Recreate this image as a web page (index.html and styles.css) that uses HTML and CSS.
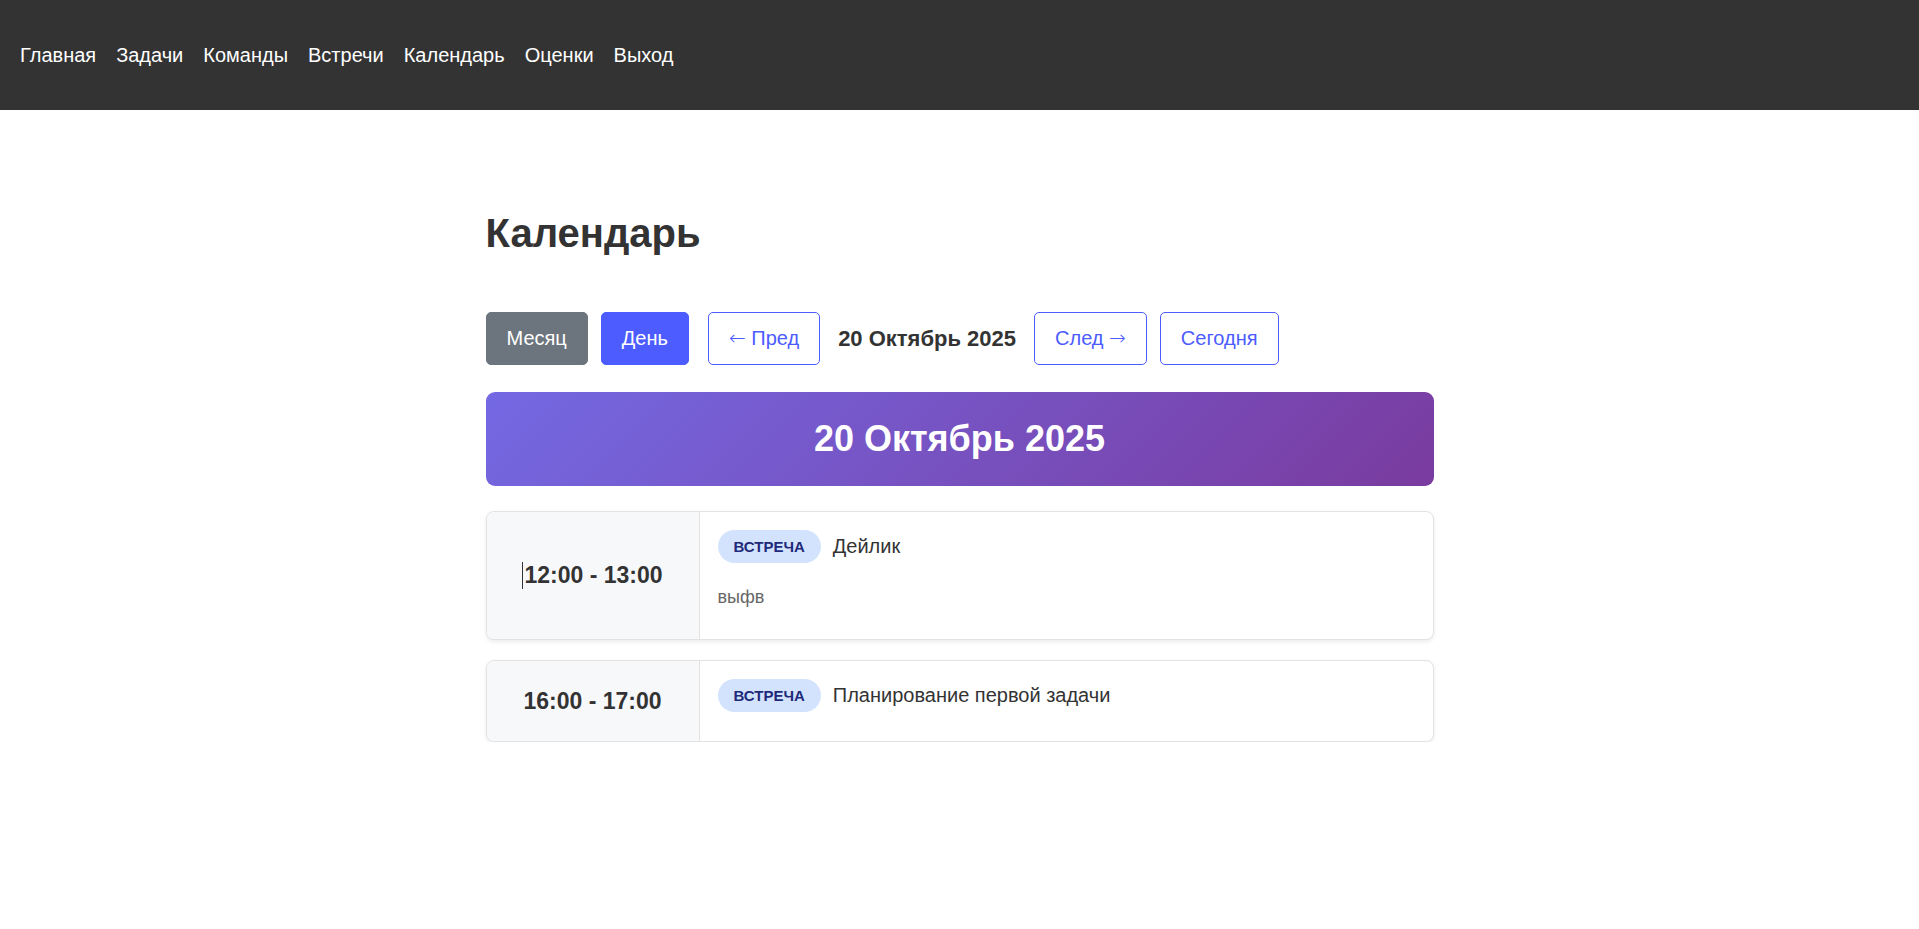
FILE: index.html
```html
<!DOCTYPE html>
<html lang="ru">
<head>
<meta charset="utf-8">
<title>Календарь</title>
<link rel="stylesheet" href="styles.css">
</head>
<body>
<nav class="topnav">
  <a href="#">Главная</a>
  <a href="#">Задачи</a>
  <a href="#">Команды</a>
  <a href="#">Встречи</a>
  <a href="#">Календарь</a>
  <a href="#">Оценки</a>
  <a href="#">Выход</a>
</nav>
<main class="container">
  <h1 class="page-title">Календарь</h1>
  <div class="toolbar">
    <button class="btn btn-secondary">Месяц</button>
    <button class="btn btn-primary">День</button>
    <button class="btn btn-outline btn-prev"><span class="arrow">←</span> Пред</button>
    <span class="current-date">20 Октябрь 2025</span>
    <button class="btn btn-outline">След <span class="arrow">→</span></button>
    <button class="btn btn-outline">Сегодня</button>
  </div>
  <div class="day-header">20 Октябрь 2025</div>
  <div class="events">
    <div class="event">
      <div class="event-time"><span class="caret"></span>12:00 - 13:00</div>
      <div class="event-body">
        <div class="event-head">
          <span class="badge">Встреча</span>
          <span class="event-title">Дейлик</span>
        </div>
        <p class="event-desc">выфв</p>
      </div>
    </div>
    <div class="event">
      <div class="event-time">16:00 - 17:00</div>
      <div class="event-body">
        <div class="event-head">
          <span class="badge">Встреча</span>
          <span class="event-title">Планирование первой задачи</span>
        </div>
      </div>
    </div>
  </div>
</main>
</body>
</html>
```
FILE: styles.css
```css
* { box-sizing: border-box; }

body {
  margin: 0;
  font-family: "Liberation Sans", Arial, sans-serif;
  color: #333;
  background: #fff;
}

.topnav {
  height: 110px;
  background: #333;
  display: flex;
  align-items: center;
  gap: 20px;
  padding-left: 20px;
}

.topnav a {
  color: #fff;
  text-decoration: none;
  font-size: 20px;
}

.container {
  width: 948px;
  margin: 0 auto;
  padding-top: 100px;
}

.page-title {
  margin: 0;
  font-size: 40px;
  line-height: 46px;
  font-weight: bold;
  color: #333;
}

.toolbar {
  display: flex;
  align-items: center;
  gap: 13px;
  margin-top: 56px;
}

.btn {
  font-family: inherit;
  font-size: 20px;
  line-height: 23px;
  padding: 14px 20px;
  border: 1px solid transparent;
  border-radius: 5px;
  cursor: pointer;
}

.arrow {
  font-family: "DejaVu Sans", sans-serif;
  font-weight: 200;
  font-size: 20px;
}

.btn-secondary {
  background: #6c757d;
  border-color: #6c757d;
  color: #fff;
}

.btn-primary {
  background: #4c5cff;
  border-color: #4c5cff;
  color: #fff;
}

.btn-outline {
  background: #fff;
  border-color: #4c5cff;
  color: #4c5cff;
}

.btn-prev { margin-left: 6px; }

.current-date {
  font-size: 22px;
  font-weight: bold;
  color: #333;
  margin: 0 5px;
}

.day-header {
  margin-top: 27px;
  padding: 25px 0;
  line-height: 44px;
  text-align: center;
  color: #fff;
  font-size: 36px;
  font-weight: bold;
  border-radius: 9px;
  background: linear-gradient(135deg, #7469e3 0%, #7a3b9f 100%);
}

.events {
  margin-top: 25px;
  display: flex;
  flex-direction: column;
  gap: 20px;
}

.event {
  display: flex;
  border: 1px solid #e2e2e2;
  border-radius: 8px;
  overflow: hidden;
  box-shadow: 0 2px 4px rgba(0, 0, 0, 0.08);
  background: #fff;
}

.event-time {
  width: 213px;
  flex: none;
  background: #f7f8fa;
  border-right: 1px solid #e2e2e2;
  display: flex;
  align-items: center;
  justify-content: center;
  font-size: 23px;
  font-weight: bold;
  color: #333;
}

.caret {
  display: inline-block;
  width: 1px;
  height: 27px;
  background: #333;
  margin-right: 1px;
}

.event-body {
  flex: 1;
  padding: 18px 18px;
}

.event-head {
  display: flex;
  align-items: center;
  gap: 12px;
  margin-bottom: 11px;
}

.badge {
  display: inline-block;
  height: 33px;
  line-height: 33px;
  padding: 0 16px;
  border-radius: 17px;
  background: #d3e3fd;
  color: #1f2a7a;
  font-size: 15px;
  font-weight: bold;
  text-transform: uppercase;
}

.event-title {
  font-size: 20px;
  color: #333;
}

.event-desc {
  margin: 20px 0 10px;
  font-size: 18px;
  line-height: 28px;
  color: #666;
}
```
